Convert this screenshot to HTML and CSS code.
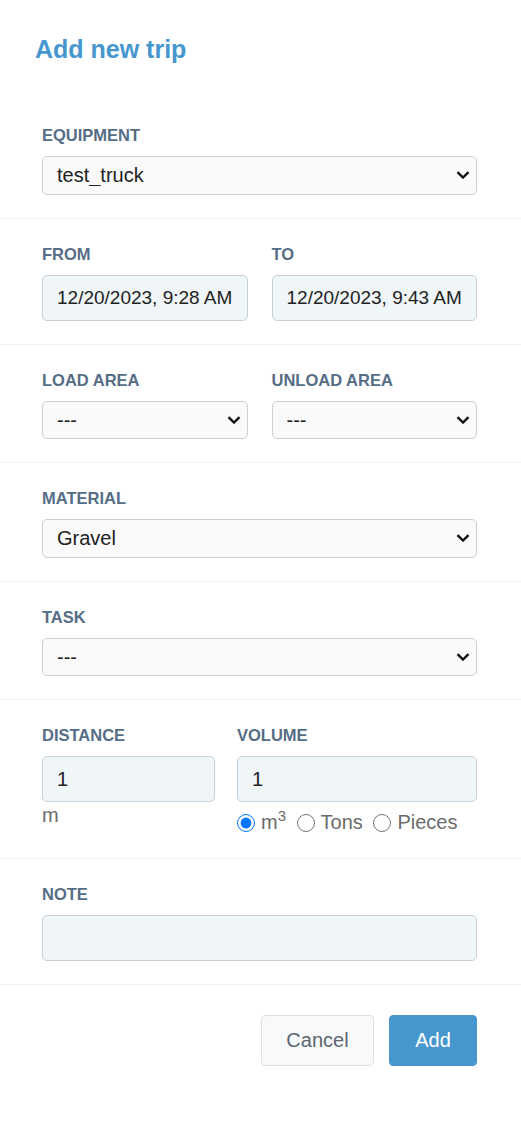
FILE: index.html
```html
<!DOCTYPE html>
<html lang="en">
<head>
<meta charset="utf-8">
<title>Add new trip</title>
<link rel="stylesheet" href="styles.css">
</head>
<body>
<div class="modal">
  <header class="head">
    <h1 class="title">Add new trip</h1>
  </header>

  <section class="sec">
    <div class="field">
      <label class="lbl">EQUIPMENT</label>
      <div class="sel-wrap">
        <select class="sel"><option>test_truck</option></select>
        <svg class="chev" width="14" height="8" viewBox="0 0 14 8"><polyline points="1.5,1.2 7,6.5 12.5,1.2" fill="none" stroke="#111" stroke-width="2.4"/></svg>
      </div>
    </div>
  </section>

  <section class="sec">
    <div class="pair">
      <div class="field">
        <label class="lbl">FROM</label>
        <input class="inp date" type="text" value="12/20/2023, 9:28 AM">
      </div>
      <div class="field">
        <label class="lbl">TO</label>
        <input class="inp date" type="text" value="12/20/2023, 9:43 AM">
      </div>
    </div>
  </section>

  <section class="sec">
    <div class="pair">
      <div class="field">
        <label class="lbl">LOAD AREA</label>
        <div class="sel-wrap">
          <select class="sel"><option>---</option></select>
          <svg class="chev" width="14" height="8" viewBox="0 0 14 8"><polyline points="1.5,1.2 7,6.5 12.5,1.2" fill="none" stroke="#111" stroke-width="2.4"/></svg>
        </div>
      </div>
      <div class="field">
        <label class="lbl">UNLOAD AREA</label>
        <div class="sel-wrap">
          <select class="sel"><option>---</option></select>
          <svg class="chev" width="14" height="8" viewBox="0 0 14 8"><polyline points="1.5,1.2 7,6.5 12.5,1.2" fill="none" stroke="#111" stroke-width="2.4"/></svg>
        </div>
      </div>
    </div>
  </section>

  <section class="sec">
    <div class="field">
      <label class="lbl">MATERIAL</label>
      <div class="sel-wrap">
        <select class="sel"><option>Gravel</option></select>
        <svg class="chev" width="14" height="8" viewBox="0 0 14 8"><polyline points="1.5,1.2 7,6.5 12.5,1.2" fill="none" stroke="#111" stroke-width="2.4"/></svg>
      </div>
    </div>
  </section>

  <section class="sec">
    <div class="field">
      <label class="lbl">TASK</label>
      <div class="sel-wrap">
        <select class="sel"><option>---</option></select>
        <svg class="chev" width="14" height="8" viewBox="0 0 14 8"><polyline points="1.5,1.2 7,6.5 12.5,1.2" fill="none" stroke="#111" stroke-width="2.4"/></svg>
      </div>
    </div>
  </section>

  <section class="sec">
    <div class="pair dv">
      <div class="field">
        <label class="lbl">DISTANCE</label>
        <input class="inp" type="text" value="1">
        <div class="unit">m</div>
      </div>
      <div class="field">
        <label class="lbl">VOLUME</label>
        <input class="inp" type="text" value="1">
        <div class="units">
          <label class="opt"><input class="rad" type="radio" name="u" checked>m<sup class="sup">3</sup></label>
          <label class="opt"><input class="rad" type="radio" name="u">Tons</label>
          <label class="opt"><input class="rad" type="radio" name="u">Pieces</label>
        </div>
      </div>
    </div>
  </section>

  <section class="sec">
    <div class="field">
      <label class="lbl">NOTE</label>
      <input class="inp" type="text" value="">
    </div>
  </section>

  <footer class="foot">
    <button class="btn cancel" type="button">Cancel</button>
    <button class="btn add" type="button">Add</button>
  </footer>
</div>
</body>
</html>
```

FILE: styles.css
```css
* { box-sizing: border-box; }

html, body {
  margin: 0;
  padding: 0;
  background: #ffffff;
}

body {
  font-family: "Liberation Sans", Arial, sans-serif;
  color: #222;
}

.modal {
  width: 521px;
}

.head {
  padding: 35px 35px 36px;
}

.title {
  margin: 0;
  font-size: 25px;
  line-height: 29px;
  font-weight: 700;
  color: #4797cf;
}

.sec {
  padding: 26px 44px 23px 42px;
  border-bottom: 1px solid #f1f1f1;
}

.field {
  display: flex;
  flex-direction: column;
  min-width: 0;
}

.lbl {
  display: block;
  font-size: 16.5px;
  line-height: 18px;
  font-weight: 700;
  color: #566d86;
  margin-bottom: 12px;
}

.pair {
  display: grid;
  grid-template-columns: 1fr 1fr;
  column-gap: 24px;
  align-items: start;
}

.pair.dv {
  grid-template-columns: 173px 1fr;
  column-gap: 22px;
}

.sel-wrap {
  position: relative;
}

.sel {
  appearance: none;
  -webkit-appearance: none;
  display: block;
  width: 100%;
  height: 38.6px;
  margin: 0;
  padding: 0 36px 0 14px;
  font-family: "Liberation Sans", Arial, sans-serif;
  font-size: 20px;
  color: #222;
  background: #fafafa;
  border: 1px solid #cfcfcf;
  border-radius: 5px;
}

.chev {
  position: absolute;
  right: 7px;
  top: 15px;
  pointer-events: none;
}

.inp {
  display: block;
  width: 100%;
  height: 46px;
  margin: 0;
  padding: 0 12px 0 14px;
  font-family: "Liberation Sans", Arial, sans-serif;
  font-size: 20px;
  color: #222;
  background: #f0f5f8;
  border: 1px solid #c7d1da;
  border-radius: 5px;
  outline: none;
}

.inp.date {
  font-size: 19px;
}

.unit {
  margin-top: 2px;
  font-size: 20px;
  line-height: 23px;
  color: #6b6b6b;
}

.units {
  margin-top: 7px;
  font-size: 20px;
  line-height: 26px;
  color: #6b6b6b;
  white-space: nowrap;
}

.rad {
  width: 18px;
  height: 18px;
  margin: 0 6px 0 5px;
  vertical-align: middle;
  position: relative;
  top: -1px;
}

.opt:first-child .rad {
  margin-left: 0;
}

.sup {
  font-size: 15px;
  line-height: 0;
}

.foot {
  display: flex;
  justify-content: flex-end;
  gap: 15px;
  padding: 30px 44px 0 42px;
}

.btn {
  height: 51px;
  margin: 0;
  font-family: "Liberation Sans", Arial, sans-serif;
  font-size: 20px;
  border-radius: 4px;
  cursor: pointer;
}

.btn.cancel {
  width: 113px;
  background: #f8f9fa;
  border: 1px solid #dce1e5;
  color: #5a6670;
}

.btn.add {
  width: 88px;
  background: #4797cf;
  border: 1px solid #4797cf;
  color: #ffffff;
}
```
